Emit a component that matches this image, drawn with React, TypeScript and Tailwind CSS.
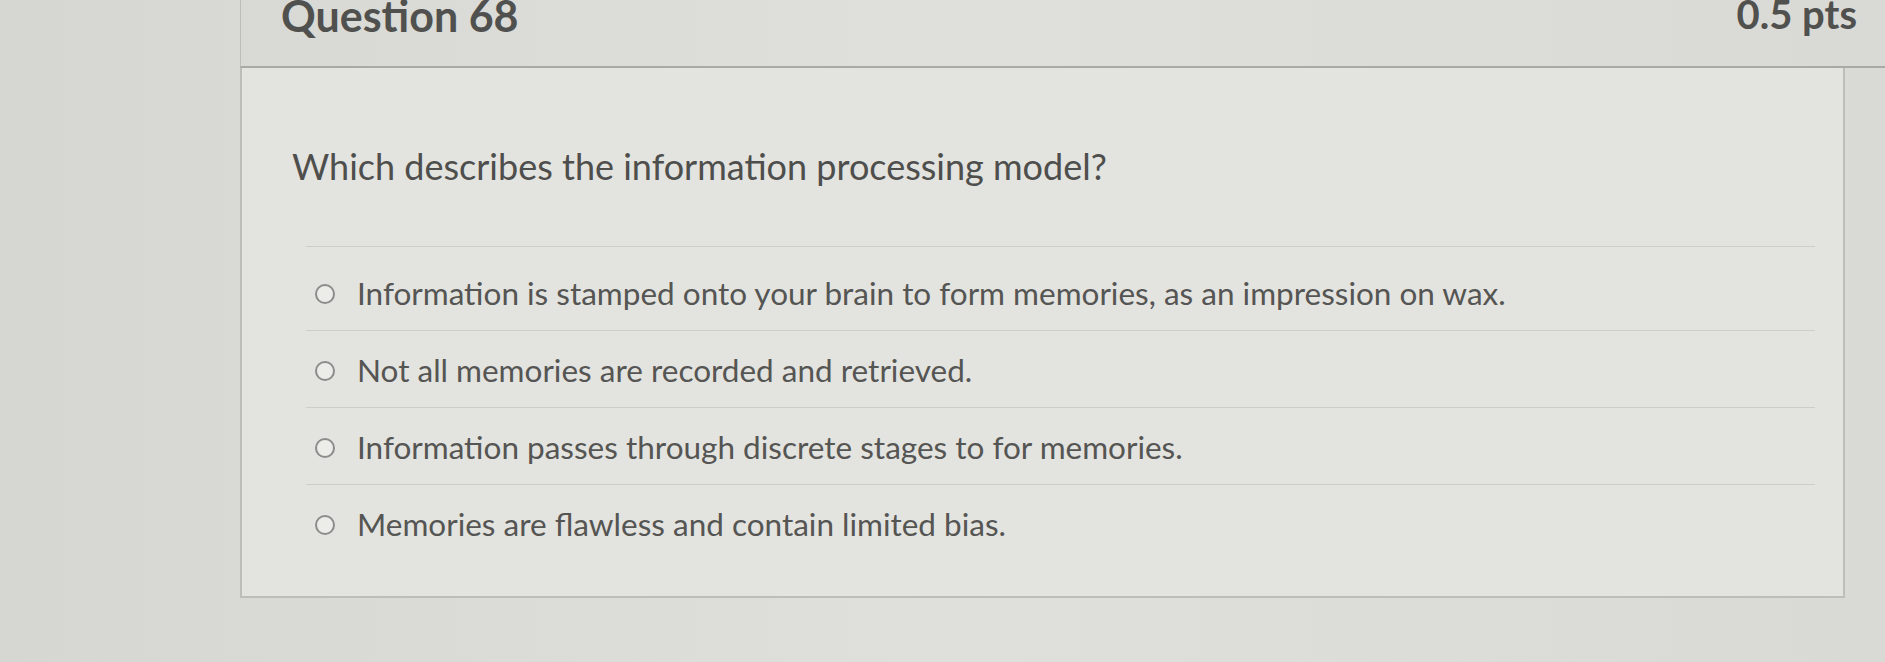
import React from "react";

const answers = [
  "Information is stamped onto your brain to form memories, as an impression on wax.",
  "Not all memories are recorded and retrieved.",
  "Information passes through discrete stages to for memories.",
  "Memories are flawless and contain limited bias.",
];

function Radio() {
  return (
    <span className="inline-block w-[20px] h-[20px] rounded-full border-2 border-[#8c8c8a] bg-[#ecece8] shrink-0" />
  );
}

export default function App() {
  return (
    <div
      className="w-full h-[662px] overflow-hidden bg-gradient-to-r from-[#d6d6d2] via-[#dfdfdb] to-[#d9d9d5] text-[#555553]"
      style={{ fontFamily: "Lato, 'Open Sans', sans-serif" }}
    >
      <div className="ml-[240px] flex flex-col">
        {/* question header */}
        <div className="h-[68px] flex items-start justify-between pl-[40px] pr-[28px] border-b-2 border-[#a9a9a6] border-l border-l-[#bdbdb9]">
          <span className="text-[43px] font-bold leading-none -mt-[6px] text-[#50504e]">Question 68</span>
          <span className="text-[40px] font-bold leading-none -mt-[6px] text-[#50504e]">0.5 pts</span>
        </div>

        {/* question body */}
        <div className="w-[1605px] h-[530px] border-l-2 border-r-2 border-b-2 border-[#bdbdb9] bg-[#e3e3df] flex flex-col">
          <div className="pl-[50px] pt-[78px] pb-[60px] text-[36px] leading-[40px] text-[#4e4e4c]">
            Which describes the information processing model?
          </div>
          <div className="ml-[64px] mr-[28px] border-t border-[#cdcdc9]">
            {answers.map((a, i) => (
              <div
                key={i}
                className={`flex items-center gap-[22px] pl-[9px] ${i === 0 ? "h-[84px] pt-[10px]" : "h-[77px] pt-[3px]"} ${i < 3 ? "border-b border-[#cdcdc9]" : ""}`}
              >
                <Radio />
                <span className="text-[31.5px] leading-none">{a}</span>
              </div>
            ))}
          </div>
        </div>
      </div>
    </div>
  );
}
